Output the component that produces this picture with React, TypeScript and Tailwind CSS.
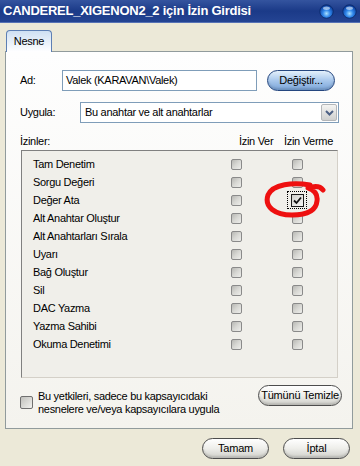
const permissions = [
  "Tam Denetim",
  "Sorgu Değeri",
  "Değer Ata",
  "Alt Anahtar Oluştur",
  "Alt Anahtarları Sırala",
  "Uyarı",
  "Bağ Oluştur",
  "Sil",
  "DAC Yazma",
  "Yazma Sahibi",
  "Okuma Denetimi",
];

const font = "font-['Tahoma','Liberation_Sans',sans-serif]";

const GrayBox = () => (
  <div className="w-[11px] h-[11px] rounded-[2px] border border-[#8a8a8a] bg-gradient-to-br from-[#b8b8b4] via-[#d8d8d4] to-[#eeeeeb]" />
);

const CheckedBox = () => (
  <div className="w-[20px] h-[18px] border border-dotted border-black flex items-center justify-center">
    <div className="w-[13px] h-[13px] border border-[#1c1c1c] bg-gradient-to-br from-[#d0d0cc] to-[#f6f6f4] flex items-center justify-center">
      <svg width="9" height="9" viewBox="0 0 9 9">
        <path d="M1 4.5 L3.5 7 L8 1.5" stroke="#111" strokeWidth="1.8" fill="none" />
      </svg>
    </div>
  </div>
);

const Orb = ({ id }: { id: string }) => (
  <svg width="15" height="15" viewBox="0 0 14 14">
    <defs>
      <radialGradient id={id} cx="50%" cy="65%" r="60%">
        <stop offset="0%" stopColor="#a8e0ff" />
        <stop offset="45%" stopColor="#2f86ea" />
        <stop offset="100%" stopColor="#0a3a98" />
      </radialGradient>
    </defs>
    <circle cx="7" cy="7" r="6.3" fill={`url(#${id})`} stroke="#0a2a6a" strokeWidth="0.8" />
    <ellipse cx="7" cy="4" rx="3.2" ry="1.6" fill="#e6f4ff" opacity="0.6" />
  </svg>
);

const PillButton = ({ label, blue, w }: { label: string; blue?: boolean; w: string }) => (
  <div
    className={`${w} h-[21px] rounded-full flex items-center justify-center text-[11px] tracking-[-0.2px] text-black border ${
      blue
        ? "border-[#25467f] bg-gradient-to-b from-[#e4f0fb] via-[#a9c8ec] to-[#7aa4d8]"
        : "border-[#4d4d4d] bg-gradient-to-b from-[#ffffff] via-[#eeeeea] to-[#cfcfca]"
    } shadow-[inset_0_-2px_2px_rgba(0,0,0,0.12)]`}
  >
    {label}
  </div>
);

export default function App() {
  return (
    <div className={`relative w-[360px] h-[466px] bg-[#ece9d8] overflow-hidden ${font} text-[11px] tracking-[-0.3px] text-black`}>
      {/* title bar */}
      <div className="h-[23px] flex items-center justify-between pl-[3px] pr-[3px] bg-gradient-to-b from-[#34549f] via-[#1b3a88] to-[#244493] border-b border-[#5672b5]">
        <span className="text-white font-bold text-[13px] tracking-[-0.25px] font-['Liberation_Sans',sans-serif]">
          CANDEREL_XIGENON2_2 için İzin Girdisi
        </span>
        <div className="flex gap-[8px]">
          <Orb id="orb1" />
          <Orb id="orb2" />
        </div>
      </div>

      {/* tab */}
      <div className="pl-[6px] mt-[7px] relative z-10">
        <div className="w-[46px] h-[22px] rounded-t-[4px] border border-b-0 border-[#5d7fb4] bg-gradient-to-b from-[#cfe0f3] to-[#ffffff] flex items-center justify-center text-[11px]">
          Nesne
        </div>
      </div>

      {/* panel */}
      <div className="ml-[5px] -mt-px w-[348px] h-[378px] border border-[#919b9c] bg-gradient-to-b from-[#fefefe] to-[#f4f3ee] flex flex-col">
        <div className="flex items-center h-[22px] mt-[17px]">
          <span className="pl-[14px] w-[56px]">Ad:</span>
          <div className="w-[195px] h-[21px] border border-[#7f9db9] bg-white flex items-center pl-[3px]">
            Valek (KARAVAN\Valek)
          </div>
          <div className="ml-[10px]">
            <PillButton label="Değiştir..." blue w="w-[68px]" />
          </div>
        </div>

        <div className="flex items-center h-[21px] mt-[11px]">
          <span className="pl-[14px] w-[74px]">Uygula:</span>
          <div className="w-[259px] h-[21px] border border-[#7f9db9] bg-white flex items-center justify-between pl-[4px] pr-px">
            <span>Bu anahtar ve alt anahtarlar</span>
            <div className="w-[16px] h-[17px] rounded-[2px] border border-[#b3b6b9] bg-gradient-to-b from-[#f4f4f2] to-[#cfd0cf] flex items-center justify-center">
              <svg width="9" height="6" viewBox="0 0 9 6">
                <path d="M1 1 L4.5 4.5 L8 1" stroke="#4d6185" strokeWidth="2" fill="none" />
              </svg>
            </div>
          </div>
        </div>

        <div className="flex items-center h-[14px] mt-[11px]">
          <span className="pl-[14px] w-[233px]">İzinler:</span>
          <span className="w-[45px]">İzin Ver</span>
          <span>İzin Verme</span>
        </div>

        <div className="ml-[15px] mt-[2px] w-[317px] h-[228px] border border-[#808080] border-r-[#d4d0c8] border-b-[#d4d0c8] bg-[#f0efea] pt-[4px]">
          {permissions.map((p, i) => (
            <div key={p} className="flex items-center h-[18px]">
              <span className="pl-[11px] w-[209px]">{p}</span>
              <GrayBox />
              <div className="ml-[50px]">
                {i === 2 ? (
                  <div className="-ml-[5px]">
                    <CheckedBox />
                  </div>
                ) : (
                  <GrayBox />
                )}
              </div>
            </div>
          ))}
        </div>

        <div className="flex items-start mt-[7px]">
          <div className="ml-[14px] mt-[11px] w-[13px] h-[13px] rounded-[2px] border border-[#6f6f6f] bg-gradient-to-br from-[#c0c0bc] to-[#f2f2ef]" />
          <div className="ml-[5px] w-[210px] leading-[13px] mt-[5px]">
            Bu yetkileri, sadece bu kapsayıcıdaki nesnelere ve/veya kapsayıcılara uygula
          </div>
          <div className="ml-[10px]">
            <PillButton label="Tümünü Temizle" w="w-[84px]" />
          </div>
        </div>
      </div>

      {/* bottom buttons */}
      <div className="flex justify-end gap-[14px] pr-[10px] mt-[9px]">
        <PillButton label="Tamam" w="w-[67px]" />
        <PillButton label="İptal" w="w-[67px]" />
      </div>

      {/* hand-drawn red mark */}
      <svg className="absolute left-[263px] top-[180px]" width="66" height="40" viewBox="0 0 66 40">
        <path
          d="M47 5 C30 2, 10 4, 5 15 C1 27, 12 35, 29 35 C43 35, 53 31, 54 21 C55 14, 51 10, 45 8 C51 6, 57 6, 60 10"
          stroke="#ee1010"
          strokeWidth="5"
          fill="none"
          strokeLinecap="round"
          strokeLinejoin="round"
        />
      </svg>
    </div>
  );
}
